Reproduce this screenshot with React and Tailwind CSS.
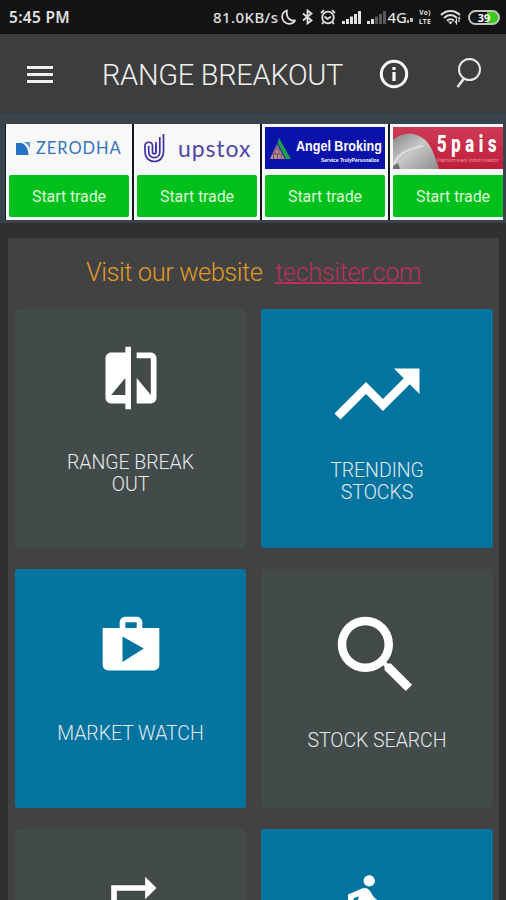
import { MdCompare, MdDirectionsRun, MdRepeat, MdSearch, MdTrendingUp } from 'react-icons/md'

function SignalBars({ weak }) {
  return (
    <svg className="w-[19px] h-[13px]" viewBox="0 0 19 13" fill="#e0e0e0">
      <rect x="0" y="10" width="3" height="3" />
      <rect x="4" y="8" width="3" height="5" />
      <rect x="8" y="5.5" width="3" height="7.5" opacity={weak ? 0.35 : 1} />
      <rect x="12" y="3" width="3" height="10" opacity={weak ? 0.35 : 1} />
      <rect x="16" y="0" width="3" height="13" opacity={weak ? 0.35 : 1} />
    </svg>
  )
}

function StatusBar() {
  return (
    <div className="h-[34px] shrink-0 bg-[#131313] text-[#e0e0e0] flex items-center pl-[9px] pr-[6px] font-['Noto_Sans',sans-serif]">
      <span className="mt-[2px] text-[15.5px] leading-none font-semibold whitespace-nowrap tracking-[0.3px]">5:45 PM</span>
      <div className="ml-auto flex items-center">
        <span className="mt-px text-[15px] leading-none font-medium whitespace-nowrap tracking-[0.4px]">81.0KB/s</span>
        <svg className="w-[15px] h-[16px] ml-[2px]" viewBox="0 0 15 16" fill="none" stroke="#e0e0e0" strokeWidth="1.8" strokeLinejoin="round">
          <path d="M6 1.5C2.5 2.5 1 5.5 1.2 8.5C1.5 12 4.5 14.8 8 14.8C10.5 14.8 12.8 13.5 14 11.5C9 12.5 4.5 8 6 1.5Z" />
        </svg>
        <svg className="w-[11px] h-[16px] ml-[6px]" viewBox="0 0 11 16" fill="none" stroke="#e0e0e0" strokeWidth="1.8">
          <path d="M1 4.5L9.5 11.5L5.5 14.5V1.5L9.5 4.5L1 11.5" />
        </svg>
        <svg className="w-[16px] h-[16px] ml-[7px]" viewBox="0 0 16 16" fill="none" stroke="#e0e0e0" strokeWidth="1.8">
          <circle cx="8" cy="8.5" r="5.8" />
          <path d="M4.5 7.5L7.5 10L11 7.5M1 4L4 1.2M15 4L12 1.2M3.5 13L2.2 15M12.5 13L13.8 15" />
        </svg>
        <div className="flex items-end h-[13px] ml-[6px] gap-[6px]">
          <SignalBars />
          <SignalBars weak />
        </div>
        <span className="text-[15px] leading-none font-medium ml-[2px] mt-px">4G</span>
        <svg className="w-[6px] h-[5px] mt-[7px]" viewBox="0 0 6 5" fill="#bdbdbd">
          <path d="M0 2h2v3H0zM3 0h3v4H3z" />
        </svg>
        <div className="ml-[4px] w-[16px] flex flex-col items-center gap-px text-[6.5px] font-bold">
          <span className="h-[8px] leading-[8px] tracking-[0.4px]">Vo)</span>
          <span className="h-[8px] leading-[8px] tracking-[0.4px]">LTE</span>
        </div>
        <svg className="w-[21px] h-[16px] ml-[7px]" viewBox="0 0 21 16" fill="none" stroke="#e0e0e0" strokeWidth="2">
          <path d="M1 6C6.5 0.5 14.5 0.5 20 6M4 9C8 5 13 5 17 9M7 11.8C9 9.8 12 9.8 14 11.8" />
          <path d="M8 12.5L10.5 15.5L13 12.5Z" fill="#e0e0e0" stroke="none" />
          <path d="M15 12l1.5 2.5V9.5M19 13V8l1 2" strokeWidth="1.2" />
        </svg>
        <div className="ml-[7px] w-[32px] h-[15px] rounded-full border-2 border-[#c4c4c4] bg-gradient-to-r from-[#131313] from-60% to-[#39c916] to-60% flex items-center justify-center text-[11px] leading-none font-bold text-white">
          39
        </div>
      </div>
    </div>
  )
}

function Header() {
  return (
    <header className="h-[80px] shrink-0 bg-[#3d3d3d] border-b-2 border-[#343a3e] flex items-center text-[#f0f0f0]">
      <div className="ml-[27px] mt-[2px] w-[26px] flex flex-col gap-[4px]">
        <span className="h-[3px] bg-[#f0f0f0]" />
        <span className="h-[3px] bg-[#f0f0f0]" />
        <span className="h-[3px] bg-[#f0f0f0]" />
      </div>
      <h1 className="ml-[49px] mt-[4px] w-[243px] text-[29px] leading-none font-light whitespace-nowrap tracking-[-0.3px]">RANGE BREAKOUT</h1>
      <svg className="w-[30px] h-[30px] ml-[34px] mt-px" viewBox="0 0 30 30" fill="none" stroke="#fafafa">
        <circle cx="15" cy="15" r="12.7" strokeWidth="3" />
        <path d="M15 13v9M15 8v3" strokeWidth="3.2" />
      </svg>
      <svg className="w-[27px] h-[32px] ml-[46px]" viewBox="0 0 27 32" fill="none" stroke="#e8e8e8" strokeWidth="2">
        <circle cx="14.5" cy="12.5" r="10.5" />
        <path d="M9 21.5L2.5 30" strokeWidth="2.6" />
      </svg>
    </header>
  )
}

function ZerodhaLogo() {
  return (
    <div className="h-full flex items-center pl-[7px]">
      <svg className="w-[14px] h-[13px]" viewBox="0 0 14 13">
        <path d="M0 1H5C9.5 2 12 6 12.5 13H0Z" fill="#2472c8" />
        <path d="M7 0H14V7C13 3.5 10.5 1.2 7 0Z" fill="#5a96d8" />
      </svg>
      <span className="ml-[6px] font-['Lato',sans-serif] text-[16.5px] leading-none text-[#3474bc] tracking-[0.9px]">ZERODHA</span>
    </div>
  )
}

function UpstoxLogo() {
  return (
    <div className="h-full flex items-center pl-[7px]">
      <svg className="w-[21px] h-[29px]" viewBox="0 0 21 29" fill="none" stroke="#3a32a4" strokeWidth="1.7">
        <path d="M19.5 0V18C19.5 23 16 27.5 10.5 27.5C5 27.5 1 23.5 1 18V12C1 7 8.5 7 8.5 12V18C8.5 20.5 12 20.5 12 18V8" />
        <path d="M15.8 3V18C15.8 25.5 4.7 25.5 4.7 18V12M12 18V11" />
      </svg>
      <span className="ml-[13px] font-['Lato',sans-serif] text-[23px] leading-none text-[#5046a4] tracking-[0.9px]">upstox</span>
    </div>
  )
}

function AngelLogo() {
  return (
    <div className="h-full bg-[#0a12ac] flex items-center pl-[5px] text-white font-['Liberation_Sans',Arial,sans-serif]">
      <svg className="w-[21px] h-[23px] shrink-0" viewBox="0 0 21 23">
        <path d="M9 1L21 22H16L7.5 6Z" fill="#1ea04c" />
        <path d="M7 7L15 22H0Z" fill="#b98a7c" />
        <path d="M4 12h7M2 17h11M7 8v4M5 12v5M9 12v5M3.5 17v5M7.5 17v5M11.5 17v5" stroke="#5a438c" strokeWidth="0.8" />
      </svg>
      <div className="ml-[5px] mt-[5px] w-[88px] flex flex-col gap-[3px]">
        <div className="h-[16px]">
          <span className="inline-block align-top origin-left scale-x-[0.81] text-[15.5px] leading-[16px] font-bold whitespace-nowrap">Angel Broking</span>
        </div>
        <div className="h-[7px] pl-[25px]">
          <span className="inline-block align-top origin-left scale-x-[0.82] text-[6px] leading-[7px] font-bold whitespace-nowrap">Service TrulyPersonalize</span>
        </div>
      </div>
    </div>
  )
}

function FivePaisaLogo() {
  return (
    <div className="h-full w-[111px] bg-gradient-to-b from-[#cc3a56] to-[#c01c3a] flex text-white">
      <svg className="w-[46px] h-[42px] shrink-0" viewBox="0 0 46 42">
        <defs>
          <linearGradient id="coin" x1="0" y1="0" x2="1" y2="1">
            <stop offset="0" stopColor="#858585" />
            <stop offset="0.45" stopColor="#c8c8c8" />
            <stop offset="1" stopColor="#8c8c8c" />
          </linearGradient>
        </defs>
        <path d="M0 13C9 5 22 5 31 12C38 17 42 29 46 42H0Z" fill="url(#coin)" />
        <path d="M1 37C5 27 14 22 30 19" stroke="#dedede" strokeWidth="2" fill="none" />
        <path d="M0 39L5 36L7 42H0Z" fill="#6d6d6d" />
      </svg>
      <div className="-ml-[2px] pt-[6px] w-[64px]">
        <div className="h-[23px]">
          <span className="inline-block align-top origin-left scale-x-[0.72] text-[23px] leading-[23px] font-black tracking-[6.5px] whitespace-nowrap">5pais</span>
        </div>
        <div className="h-[6px] mt-px">
          <span className="inline-block align-top origin-left scale-x-[0.92] text-[5px] leading-[6px] text-[#e8909c] whitespace-nowrap">Premium every Indian investor</span>
        </div>
      </div>
    </div>
  )
}

const brokers = [
  { name: 'Zerodha', Logo: ZerodhaLogo },
  { name: 'Upstox', Logo: UpstoxLogo },
  { name: 'Angel Broking', Logo: AngelLogo },
  { name: '5paisa', Logo: FivePaisaLogo },
]

function BrokerStrip() {
  return (
    <div className="h-[109px] shrink-0 bg-[#39434c] pt-[10px] pl-[5px] pr-[3px]">
      <div className="flex gap-[2px] h-[96px] overflow-hidden bg-[#111820] pl-px">
        {brokers.map(({ name, Logo }) => (
          <div key={name} className="w-[126px] shrink-0 bg-[#f8f8f8] p-[3px] flex flex-col justify-between">
            <div className="h-[42px]">
              <Logo />
            </div>
            <button type="button" className="h-[42px] pt-[2px] rounded-[2px] bg-[#00c01c] text-[#dcf5d8] text-[16px] leading-none tracking-[-0.1px]">
              Start trade
            </button>
          </div>
        ))}
      </div>
    </div>
  )
}

function ShopIcon({ className }) {
  return (
    <svg className={className} viewBox="0 0 24 24" fill="currentColor">
      <path fillRule="evenodd" d="M16 6V4c0-1.11-.89-2-2-2h-4c-1.11 0-2 .89-2 2v2H2v13c0 1.11.89 2 2 2h16c1.11 0 2-.89 2-2V6h-6zm-6-2h4v2h-4V4zM9 18V9l7.5 4.25L9 18z" />
    </svg>
  )
}

const tiles = [
  { label: 'RANGE BREAK OUT', Icon: MdCompare, color: 'bg-[#424a4a]', pad: 'pt-[35px]', icon: 'w-[68px] h-[68px]', text: 'mt-[40px]' },
  { label: 'TRENDING STOCKS', Icon: MdTrendingUp, color: 'bg-[#03739f]', pad: 'pt-[34px]', icon: 'w-[102px] h-[102px]', text: 'mt-[15px]' },
  { label: 'MARKET WATCH', Icon: ShopIcon, color: 'bg-[#03739f]', pad: 'pt-[42px]', icon: 'w-[68px] h-[68px]', text: 'mt-[44px]' },
  { label: 'STOCK SEARCH', Icon: MdSearch, color: 'bg-[#424a4a]', pad: 'pt-[35px]', icon: 'w-[102px] h-[102px] mr-[2px]', text: 'mt-[24px]' },
  { label: '', Icon: MdRepeat, color: 'bg-[#424a4a]', pad: 'pt-[42px]', icon: 'w-[68px] h-[68px]', text: '' },
  { label: '', Icon: MdDirectionsRun, color: 'bg-[#03739f]', pad: 'pt-[42px]', icon: 'w-[68px] h-[68px] mr-[25px]', text: '' },
]

function App() {
  return (
    <div className="w-[506px] h-[900px] overflow-hidden flex flex-col bg-[#303030] font-['Roboto',sans-serif]">
      <StatusBar />
      <Header />
      <BrokerStrip />
      <main className="mt-[15px] ml-[8px] w-[491px] shrink-0 rounded-[3px] bg-[#424242] px-[7px]">
        <p className="h-[71px] pl-[71px] pb-px flex items-center text-[25.5px] leading-none font-light whitespace-nowrap tracking-[-0.45px]">
          <span className="w-[189px] text-[#e09a28]">Visit our website</span>
          <a href="#website" className="text-[#b8305c] underline decoration-2 underline-offset-[1px]">techsiter.com</a>
        </p>
        <div className="grid grid-cols-[231px_232px] gap-x-[15px] gap-y-[21px] auto-rows-[239px]">
          {tiles.map(({ label, Icon, color, pad, icon, text }, i) => (
            <div key={i} className={`${color} ${pad} rounded-[3px] flex flex-col items-center text-white`}>
              <Icon className={`${icon} shrink-0`} />
              <span className={`${text} w-[150px] text-center text-[19.5px] leading-[22px] text-[#e4eaec] font-light tracking-[-0.05px]`}>{label}</span>
            </div>
          ))}
        </div>
      </main>
    </div>
  )
}

export default App
